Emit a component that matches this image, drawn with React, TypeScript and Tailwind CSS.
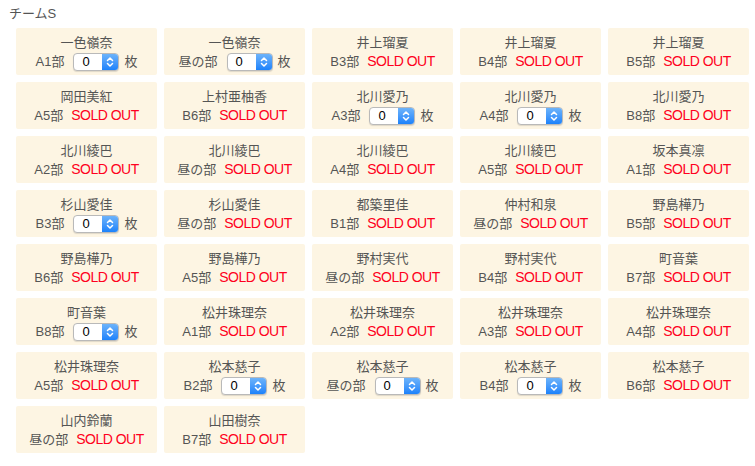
import React from 'react';

type Slot = { name: string; part: string; soldOut: boolean };

const rows: [string, string, boolean][] = [
  ['一色嶺奈', 'A1部', false],
  ['一色嶺奈', '昼の部', false],
  ['井上瑠夏', 'B3部', true],
  ['井上瑠夏', 'B4部', true],
  ['井上瑠夏', 'B5部', true],
  ['岡田美紅', 'A5部', true],
  ['上村亜柚香', 'B6部', true],
  ['北川愛乃', 'A3部', false],
  ['北川愛乃', 'A4部', false],
  ['北川愛乃', 'B8部', true],
  ['北川綾巴', 'A2部', true],
  ['北川綾巴', '昼の部', true],
  ['北川綾巴', 'A4部', true],
  ['北川綾巴', 'A5部', true],
  ['坂本真凛', 'A1部', true],
  ['杉山愛佳', 'B3部', false],
  ['杉山愛佳', '昼の部', true],
  ['都築里佳', 'B1部', true],
  ['仲村和泉', '昼の部', true],
  ['野島樺乃', 'B5部', true],
  ['野島樺乃', 'B6部', true],
  ['野島樺乃', 'A5部', true],
  ['野村実代', '昼の部', true],
  ['野村実代', 'B4部', true],
  ['町音葉', 'B7部', true],
  ['町音葉', 'B8部', false],
  ['松井珠理奈', 'A1部', true],
  ['松井珠理奈', 'A2部', true],
  ['松井珠理奈', 'A3部', true],
  ['松井珠理奈', 'A4部', true],
  ['松井珠理奈', 'A5部', true],
  ['松本慈子', 'B2部', false],
  ['松本慈子', '昼の部', false],
  ['松本慈子', 'B4部', false],
  ['松本慈子', 'B6部', true],
  ['山内鈴蘭', '昼の部', true],
  ['山田樹奈', 'B7部', true],
];

const slots: Slot[] = rows.map(([name, part, soldOut]) => ({ name, part, soldOut }));

const Stepper = () => (
  <div className="flex h-[18px] w-[46px] overflow-hidden rounded-[4px] border border-[#b9b9b9] bg-white shadow-[0_1px_1px_rgba(0,0,0,0.12)]">
    <div className="flex flex-1 items-center pl-[8px] text-[13px] leading-none text-black">0</div>
    <div className="flex w-[16px] items-center justify-center bg-gradient-to-b from-[#6cb3fa] to-[#1a82fb]">
      <svg width="8" height="12" viewBox="0 0 8 12" fill="none" stroke="white" strokeWidth="1.5" strokeLinecap="round" strokeLinejoin="round">
        <path d="M1.5 4.5 L4 2 L6.5 4.5" />
        <path d="M1.5 7.5 L4 10 L6.5 7.5" />
      </svg>
    </div>
  </div>
);

const Card = ({ slot }: { slot: Slot }) => (
  <div className="flex h-[47px] flex-col items-center rounded-[2px] bg-[#fdf5e3] pt-[6px]">
    <div className="text-[13px] leading-[18px] text-[#555]">{slot.name}</div>
    <div className="flex items-center text-[13px] leading-[19px] text-[#555]">
      <span>{slot.part}</span>
      {slot.soldOut ? (
        <span className="ml-[8px] text-[14px] tracking-[-0.5px] text-[#ff0020]">SOLD OUT</span>
      ) : (
        <>
          <span className="ml-[9px]">
            <Stepper />
          </span>
          <span className="ml-[5px]">枚</span>
        </>
      )}
    </div>
  </div>
);

export default function App() {
  return (
    <div
      className="min-h-[466px] w-[755px] bg-white pl-[9px] pt-[6px]"
      style={{ fontFamily: '"Liberation Sans", "Noto Sans CJK JP", sans-serif' }}
    >
      <div className="text-[13px] leading-[16px] text-[#555]">チームS</div>
      <div className="ml-[7px] mt-[6px] grid w-[733px] grid-cols-[repeat(5,141px)] gap-[7px]">
        {slots.map((s, i) => (
          <Card key={i} slot={s} />
        ))}
      </div>
    </div>
  );
}
